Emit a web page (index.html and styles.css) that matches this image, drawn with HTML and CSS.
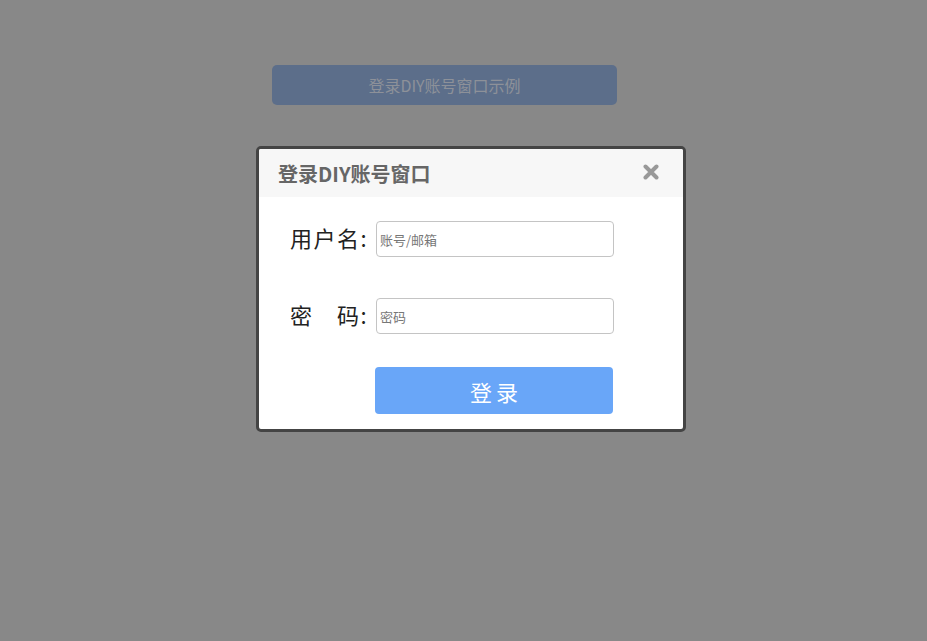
FILE: index.html
```html
<!DOCTYPE html>
<html lang="zh-CN">
<head>
    <meta charset="UTF-8">
    <title>登录DIY账号窗口示例</title>
    <link rel="stylesheet" href="styles.css">
</head>
<body>
    <div class="page">
        <button class="trigger">登录DIY账号窗口示例</button>

        <div class="dialog">
            <div class="dialog-head">
                <span class="dialog-title">登录DIY账号窗口</span>
                <span class="dialog-close">
                    <svg width="16" height="16" viewBox="0 0 16 16">
                        <path d="M2.5 2.5 L13.5 13.5 M13.5 2.5 L2.5 13.5" stroke="#999" stroke-width="4" stroke-linecap="round"/>
                    </svg>
                </span>
            </div>
            <div class="dialog-body">
                <div class="row">
                    <label class="label" for="user">用户名:</label>
                    <input class="field" id="user" type="text" placeholder="账号/邮箱">
                </div>
                <div class="row">
                    <label class="label" for="pwd">密　码:</label>
                    <input class="field" id="pwd" type="password" placeholder="密码">
                </div>
                <button class="submit">登录</button>
            </div>
        </div>
    </div>
</body>
</html>
```

FILE: styles.css
```css
body {
    margin: 0;
    background-color: #888888;
    font-family: "Noto Sans CJK SC", "Liberation Sans", sans-serif;
    height: 641px;
    overflow: hidden;
}

.page {
    display: flex;
    flex-direction: column;
    align-items: flex-start;
}

.trigger {
    margin: 65px 0 0 272px;
    width: 345px;
    height: 40px;
    border: none;
    border-radius: 5px;
    background-color: #5c6e8a;
    color: #8d9199;
    font-family: "Noto Sans CJK SC", sans-serif;
    font-size: 16px;
    line-height: 40px;
    padding: 0;
}

.dialog {
    margin: 41px 0 0 256px;
    width: 424px;
    border: 3px solid #444444;
    border-radius: 5px;
    background-color: #ffffff;
    overflow: hidden;
}

.dialog-head {
    height: 48px;
    background-color: #f7f7f7;
    display: flex;
    align-items: center;
    justify-content: space-between;
    padding: 0 24px 0 19px;
}

.dialog-title {
    font-size: 20px;
    font-weight: bold;
    color: #666666;
}

.dialog-close {
    display: flex;
    width: 16px;
    height: 16px;
    margin-top: -2px;
}

.dialog-body {
    padding: 24px 0 15px 0;
    display: flex;
    flex-direction: column;
}

.row {
    display: flex;
    align-items: center;
    height: 36px;
    margin-bottom: 41px;
}

.row + .row {
    margin-bottom: 33px;
}

.label {
    width: 86px;
    padding-left: 31px;
    margin-top: -5px;
    font-size: 22px;
    line-height: 1;
    letter-spacing: 1.5px;
    color: #222222;
    white-space: nowrap;
}

.field {
    box-sizing: border-box;
    width: 238px;
    height: 36px;
    border: 1px solid #c4c4c4;
    border-radius: 4px;
    padding: 0 3px;
    font-family: "Noto Sans CJK SC", sans-serif;
    font-size: 13px;
    color: #333;
}

.field::placeholder {
    color: #777777;
}

.submit {
    margin-left: 116px;
    width: 238px;
    height: 47px;
    border: none;
    border-radius: 4px;
    background-color: #69a6f8;
    color: #ffffff;
    font-family: "Noto Sans CJK SC", sans-serif;
    font-size: 22px;
    letter-spacing: 4px;
    padding: 0 0 0 4px;
}
```
